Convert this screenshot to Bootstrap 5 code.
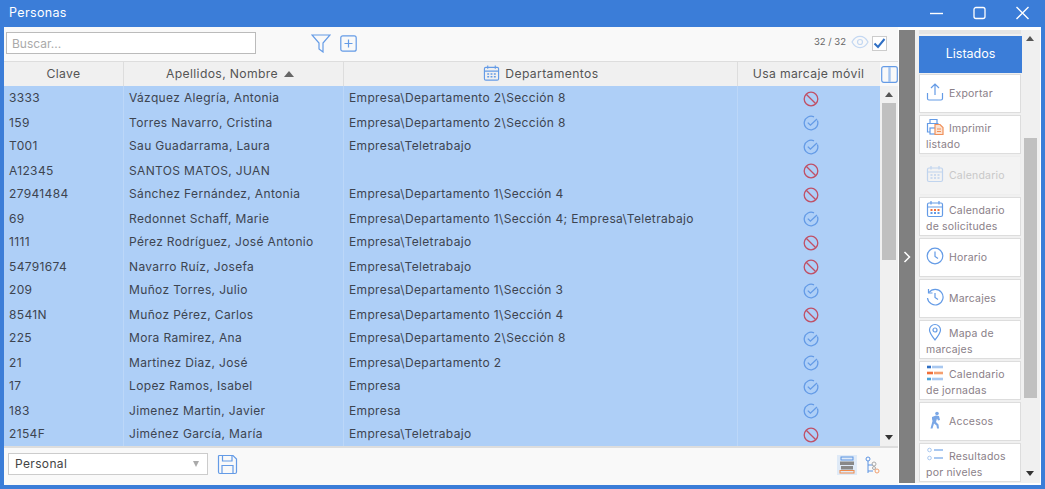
<!DOCTYPE html>
<html lang="es">
<head>
    <meta charset="utf-8" />
    <title>Personas</title>
    <link href="https://cdn.jsdelivr.net/npm/bootstrap@5.3.0/dist/css/bootstrap.min.css" rel="stylesheet">
    <style>
        html, body { height: 489px; overflow: hidden; }
        body { background: #3b7dd8; font-family: Inter, "Liberation Sans", sans-serif; font-size: 12px; letter-spacing: .35px; color: #444; }

        .title-bar { height: 27px; padding: 0 14px 0 9px; color: #fff; font-size: 12.5px; }
        .win-btn { width: 17px; height: 17px; margin-left: 26px; stroke: #fff; fill: none; }
        .win-body { height: 458px; margin: 0 4px 4px; background: #fff; }

        /* left panel */
        .main-panel { width: 894px; background: #f9f9f9; }
        .toolbar { height: 35px; padding-top: 5px; border-bottom: 1px solid #ddd; }
        .search { width: 250px; height: 22px; margin-left: 2px; border: 1px solid #bbb; background: #fff; padding: 0 5px; font-size: 12px; }
        .search::placeholder { color: #aaa; }
        .count { font-size: 9.5px; color: #666; letter-spacing: 0; margin-left: auto; margin-top: 3px; }
        .grid-wrap { height: 384px; }
        .grid-table { width: 876px; table-layout: fixed; margin: 0; }
        .grid-table th { height: 24px; padding: 0; background: #f0f0f0; color: #555; font-weight: 400; text-align: center; border-right: 1px solid #ddd; border-bottom: 0; font-size: 12.2px; line-height: 24px; }
        .grid-table th.col-name { padding-right: 7px; }
        .grid-table td { height: 24px; padding: 0 5px; background: #aecff7; color: #3d4450; border-bottom: 0; border-right: 1px solid #bcd7f8; line-height: 24px; white-space: nowrap; }
        .grid-table tr:nth-child(even) td { padding-top: 2px; line-height: 22px; }
        .grid-table td:last-child, .grid-table th:last-child { border-right: 0; text-align: center; }
        .grid-table th:last-child { padding-right: 1px; }
        .grid-table tr td:last-child { padding: 0 0 0 4px; line-height: 0; }
        .grid-table td svg { display: block; margin: 5px auto 0; }
        .head-cal { margin-right: 2px; vertical-align: -4px; }
        .sort-arrow { display: inline-block; margin-left: 6px; border: 5px solid transparent; border-top: 0; border-bottom: 6px solid #666; vertical-align: 1px; }
        .vscroll { width: 18px; background: #f0f0f0; }
        .vscroll .corner { height: 24px; padding-left: 1px; background: #f9f9f9; }
        .arrow-up, .arrow-down { width: 0; margin: 6px auto; border: 4px solid transparent; }
        .arrow-up { border-top: 0; border-bottom: 5px solid #555; }
        .arrow-down { border-bottom: 0; border-top: 5px solid #333; }
        .thumb { background: #c0c0c0; }
        .thumb-grid { height: 157px; margin: 0 2px; }
        .footer-bar { height: 39px; border-top: 2px solid #ddd; padding: 5px 4px; }
        .combo { width: 200px; height: 22px; border: 1px solid #ccc; background: #fff; padding: 0 8px 0 6px; font-size: 12px; line-height: 20px; }
        .combo-arrow { border: 3px solid transparent; border-bottom: 0; border-top: 6px solid #aaa; }
        .save-ico { stroke-width: 1.6; margin: 1px 0 0 9px; }
        .view-on { width: 20px; height: 20px; margin: 2px 0 0 auto; background: #dfeaf7; }
        .tree-ico { margin: 3px 14px 0 8px; }

        /* collapse bar and side panel */
        .collapse-bar { width: 16px; margin: 3px 0 2px 1px; background: #808080; }
        .side-panel { width: 125px; margin: 3px 1px 2px 0; background: #f0f0f0; }
        .side-list { width: 109px; padding: 0 3px 0 4px; overflow: hidden; }
        .side-sliver { height: 4px; background: #e4e4e4; margin-bottom: 2px; }
        .btn-listados { height: 37px; width: 103px; border-radius: 0; background: #3b7dd8; color: #fff; border: 0; font-size: 12.5px; margin-bottom: 1px; }
        .side-btn { height: 39px; width: 102px; margin-bottom: 2px; padding: 2px 6px 0; background: #fff; border: 1px solid #ddd; font-size: 10.5px; letter-spacing: .2px; line-height: 16px; color: #8a8088; overflow: hidden; }
        .side-btn svg { width: 18px; height: 18px; margin-right: 5px; vertical-align: -4px; }
        .side-btn.off { background: #f3f3f3; border-color: #eee; color: #c8c8c8; }
        .side-btn.off svg { opacity: .35; }
        .side-btn.one { padding-top: 8px; }
        .side-scroll { width: 16px; }
        .side-scroll .arrow-up, .side-scroll .arrow-down { margin-left: 2px; }
        .side-scroll .arrow-up { margin-top: 6px; margin-bottom: 0; }
        .side-scroll .arrow-down { margin-bottom: 7px; }
        .thumb-side { height: 260px; margin: 97px 3px 0 0; }
        .ico { fill: none; stroke: #649be6; stroke-width: 1.2; }
        .ico-pale { fill: none; stroke: #a9c8f0; stroke-width: 1; }
        .toolbar-filter { margin: 2px 0 0 55px; }
        .toolbar-add { margin: 3px 0 0 9px; }
        .toolbar-eye { margin: 3px 0 0 5px; stroke: #c4d8f2; }
        .toolbar-check { margin: 4px 11px 0 3px; }
    </style>
</head>
<body>
    <!-- Shared icons -->
    <svg width="0" height="0" class="position-absolute">
        <symbol id="i-cal" viewBox="0 0 18 18"><rect x="1.5" y="3" width="15" height="13.5" rx="1.5"/><path d="M1.5 7h15M5 1v3.5M13 1v3.5"/><path d="M4.5 10h2M8 10h2M11.5 10h2M4.500 13h2M8 13h2M11.5 13h2" stroke-width="1.6"/></symbol>
        <symbol id="i-no" viewBox="0 0 16 16"><circle cx="8" cy="8" r="6.8"/><path d="M3.2 3.2l9.6 9.6"/></symbol>
        <symbol id="i-ok" viewBox="0 0 16 16"><path d="M14.4 5.6A6.8 6.8 0 1 1 11 1.9"/><path d="M4.8 7.6l2.6 2.6L14 4"/></symbol>
    </svg>

    <!-- Title bar -->
    <div class="title-bar d-flex align-items-center">
        <span class="me-auto">Personas</span>
        <svg class="win-btn" viewBox="0 0 17 17"><path d="M2 8.5h13" stroke-width="1.4"/></svg>
        <svg class="win-btn" viewBox="0 0 17 17"><rect x="3" y="2.5" width="11" height="11" rx="2" stroke-width="1.3"/></svg>
        <svg class="win-btn" viewBox="0 0 17 17"><path d="M2.5 2l12 12M14.5 2l-12 12" stroke-width="1.4"/></svg>
    </div>

    <div class="win-body d-flex">
        <div class="main-panel d-flex flex-column">
            <!-- Search and counters -->
            <div class="toolbar d-flex align-items-start">
                <input class="search" type="text" placeholder="Buscar...">
                <svg class="ico toolbar-filter" width="20" height="19" viewBox="0 0 20 19"><path d="M1 1h18l-7 8v9l-4-3V9z"/></svg>
                <svg class="ico toolbar-add" width="17" height="17" viewBox="0 0 17 17"><rect x=".8" y=".8" width="15.4" height="15.4" rx="2"/><path d="M8.5 4.5v8M4.5 8.500h8"/></svg>
                <span class="count">32 / 32</span>
                <svg class="ico toolbar-eye" width="18" height="14" viewBox="0 0 18 14"><path d="M1 7c4-7.500 12-7.500 16 0-4 7.500-12 7.500-16 0z"/><circle cx="9" cy="7" r="2.500"/></svg>
                <svg class="toolbar-check" width="15" height="15" viewBox="0 0 15 15"><rect x=".5" y=".5" width="14" height="14" fill="#fff" stroke="#ccc"/><path d="M2.500 7.500l3.500 3.500 6.500-8" fill="none" stroke="#2f6fc4" stroke-width="2"/></svg>
            </div>

            <!-- Grid -->
            <div class="grid-wrap d-flex">
                <table class="table grid-table">
                    <colgroup><col style="width:119.500px"><col style="width:220px"><col style="width:394px"><col></colgroup>
                    <thead>
                        <tr>
                            <th>Clave</th>
                            <th class="col-name">Apellidos, Nombre<span class="sort-arrow"></span></th>
                            <th><svg class="ico head-cal" width="17" height="18"><use href="#i-cal"/></svg> Departamentos</th>
                            <th>Usa marcaje móvil</th>
                        </tr>
                    </thead>
                    <tbody id="rows"></tbody>
                </table>
                <div class="vscroll d-flex flex-column">
                    <div class="corner d-flex align-items-center">
                        <svg class="ico" width="17" height="17" viewBox="0 0 17 17"><rect x=".7" y=".7" width="15.600" height="15.600" rx="2"/><path d="M8.500 1v15" stroke-width="2.400" stroke="#a5c5ef"/></svg>
                    </div>
                    <div class="arrow-up"></div>
                    <div class="thumb thumb-grid"></div>
                    <div class="flex-grow-1"></div>
                    <div class="arrow-down"></div>
                </div>
            </div>

            <!-- Footer -->
            <div class="footer-bar d-flex align-items-start">
                <div class="combo d-flex align-items-center justify-content-between"><span>Personal</span><span class="combo-arrow"></span></div>
                <svg class="ico save-ico" width="21" height="21" viewBox="0 0 21 21"><path d="M2 1.500h14l3.500 3.500v13a1.500 1.500 0 0 1-1.500 1.500H3A1.500 1.500 0 0 1 1.500 18V2z"/><path d="M5.500 2v5h9.500V2M5 19.500v-8h11v8"/></svg>
                <div class="view-on d-flex align-items-center justify-content-center">
                    <svg width="16" height="18" viewBox="0 0 16 18"><rect x="2" y="1" width="12" height="3" fill="none" stroke="#5b93e2"/><rect x="1" y="5.500" width="14" height="3.500" fill="#888"/><rect x="2" y="10" width="12" height="3.500" fill="#888"/><rect x="1" y="14.500" width="14" height="2.500" fill="none" stroke="#f08a4b"/></svg>
                </div>
                <svg class="tree-ico" width="15" height="18" viewBox="0 0 15 18" fill="none"><circle cx="3" cy="3" r="2" stroke="#5b93e2"/><path d="M3 5v12M3 9h5M3 15h5" stroke="#5b93e2"/><circle cx="9" cy="8" r="2" stroke="#aaa"/><circle cx="9" cy="12" r="1.500" stroke="#aaa"/><circle cx="12" cy="15" r="2" stroke="#f0a070"/></svg>
            </div>
        </div>

        <!-- Collapse handle -->
        <div class="collapse-bar d-flex align-items-center justify-content-center">
            <svg width="8" height="12" viewBox="0 0 8 12" fill="none"><path d="M1.500 1l5 5-5 5" stroke="#fff" stroke-width="1.500"/></svg>
        </div>

        <!-- Side actions -->
        <div class="side-panel d-flex">
            <div class="side-list">
                <div class="side-sliver"></div>
                <button class="btn btn-listados d-block">Listados</button>
                <div class="side-btn one"><svg class="ico" viewBox="0 0 18 18"><path d="M1.500 10v5.500a1.500 1.500 0 0 0 1.500 1.500h12a1.500 1.500 0 0 0 1.500-1.500V10M9 12V1.500M5 5l4-4 4 4"/></svg>Exportar</div>
                <div class="side-btn"><svg class="ico" viewBox="0 0 18 18"><path d="M4 5V1.500h7V5M4 14H1.500V5.500h11"/><rect x="4" y="10" width="6" height="6"/><path d="M9 6.500h5l3 3V16.500H9z" stroke="#f0905a" fill="#fde3d2"/><path d="M11 11h4M11 13.500h4" stroke="#f0905a"/></svg>Imprimir listado</div>
                <div class="side-btn one off"><svg class="ico"><use href="#i-cal"/></svg>Calendario</div>
                <div class="side-btn"><svg class="ico" viewBox="0 0 18 18"><rect x="1.500" y="3" width="15" height="13.500" rx="1.500"/><path d="M1.500 7h15M5 1v3.500M13 1v3.500"/><path d="M4.500 10h2M8 10h2M11.500 10h2" stroke="#f0703a" stroke-width="1.800"/><path d="M4.500 13h2M8 13h2M11.500 13h2" stroke-width="1.800"/></svg>Calendario de solicitudes</div>
                <div class="side-btn one"><svg class="ico" viewBox="0 0 18 18"><circle cx="9" cy="9" r="7.800"/><path d="M9 4.500V9.500l3 2"/></svg>Horario</div>
                <div class="side-btn one"><svg class="ico" viewBox="0 0 18 18"><path d="M3 4.500A7.800 7.800 0 1 1 1.500 10"/><path d="M2.500 1v4h4M9 5v4.500l3 2"/></svg>Marcajes</div>
                <div class="side-btn"><svg class="ico" viewBox="0 0 18 18"><path d="M9 17C5.500 12.500 3.500 10 3.500 7a5.500 5.500 0 0 1 11 0c0 3-2 5.500-5.500 10z"/><circle cx="9" cy="7" r="2"/></svg>Mapa de marcajes</div>
                <div class="side-btn"><svg viewBox="0 0 18 18" fill="none" stroke-width="2.600"><path d="M1 3h4" stroke="#2f6fc4"/><path d="M6 3h11" stroke="#a9c8f0"/><path d="M1 9h6" stroke="#f0703a"/><path d="M8 9h9" stroke="#f5a070"/><path d="M1 15h4" stroke="#4aa3d8"/><path d="M6 15h11" stroke="#a9c8f0"/></svg>Calendario de jornadas</div>
                <div class="side-btn one"><svg viewBox="0 0 18 18" fill="#7aa7e6"><circle cx="11" cy="2.500" r="1.800"/><path d="M6 6l4-1.500 3 .5 1 4-2 .5-1-2-1 3.500 2.500 2.500.5 4h-2l-.5-3-2.500-2-1.500 5h-2l2-7.500-.5-2z"/></svg>Accesos</div>
                <div class="side-btn"><svg class="ico-pale" viewBox="0 0 18 18"><circle cx="3.500" cy="4" r="1.800"/><circle cx="3.500" cy="12" r="1.800"/><path d="M8 4h9M8 12h9" stroke-width="1.800"/></svg>Resultados por niveles</div>
            </div>
            <div class="side-scroll d-flex flex-column">
                <div class="arrow-up"></div>
                <div class="thumb thumb-side"></div>
                <div class="flex-grow-1"></div>
                <div class="arrow-down"></div>
            </div>
        </div>
    </div>

    <script>
    // Grid rows: [clave, nombre, departamento, usa marcaje]
    const people = [
      ["3333", "Vázquez Alegría, Antonia", "Empresa\\Departamento 2\\Sección 8", false],
      ["159", "Torres Navarro, Cristina", "Empresa\\Departamento 2\\Sección 8", true],
      ["T001", "Sau Guadarrama, Laura", "Empresa\\Teletrabajo", true],
      ["A12345", "SANTOS MATOS, JUAN", "", false],
      ["27941484", "Sánchez Fernández, Antonia", "Empresa\\Departamento 1\\Sección 4", false],
      ["69", "Redonnet Schaff, Marie", "Empresa\\Departamento 1\\Sección 4; Empresa\\Teletrabajo", true],
      ["1111", "Pérez Rodríguez, José Antonio", "Empresa\\Teletrabajo", false],
      ["54791674", "Navarro Ruíz, Josefa", "Empresa\\Teletrabajo", false],
      ["209", "Muñoz Torres, Julio", "Empresa\\Departamento 1\\Sección 3", true],
      ["8541N", "Muñoz Pérez, Carlos", "Empresa\\Departamento 1\\Sección 4", false],
      ["225", "Mora Ramirez, Ana", "Empresa\\Departamento 2\\Sección 8", true],
      ["21", "Martinez Diaz, José", "Empresa\\Departamento 2", true],
      ["17", "Lopez Ramos, Isabel", "Empresa", true],
      ["183", "Jimenez Martin, Javier", "Empresa", true],
      ["2154F", "Jiménez García, María", "Empresa\\Teletrabajo", false]
    ];
    document.getElementById("rows").innerHTML = people.map(p => `
      <tr>
        <td>${p[0]}</td>
        <td>${p[1]}</td>
        <td>${p[2]}</td>
        <td><svg width="16" height="16" fill="none" stroke="${p[3] ? "#649be6" : "#c05066"}" stroke-width="1.300"><use href="#${p[3] ? "i-ok" : "i-no"}"/></svg></td>
      </tr>`).join("");
    </script>
    <script src="https://cdn.jsdelivr.net/npm/bootstrap@5.3.0/dist/js/bootstrap.bundle.min.js"></script>
</body>
</html>
